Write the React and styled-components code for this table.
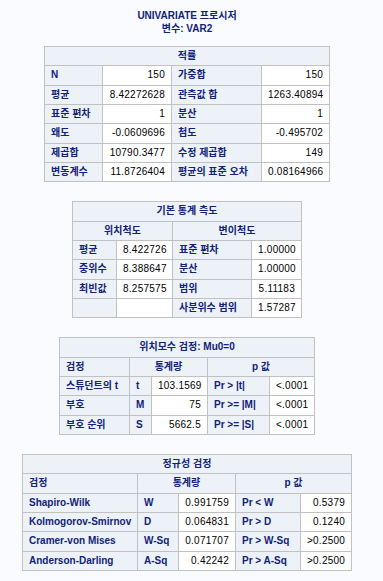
import React from "react";
import styled, { createGlobalStyle } from "styled-components";

const Global = createGlobalStyle`
  html, body { margin: 0; padding: 0; background: #fafbfe; }
  body { font-family: "Liberation Sans", Arial, "Noto Sans CJK KR", sans-serif; }
`;

const Page = styled.div`
  width: 374px;
  padding-top: 10px;
  display: flex;
  flex-direction: column;
  align-items: center;
`;

const Title = styled.div`
  text-align: center;
  color: #112277;
  font-weight: bold;
  font-size: 10px;
  line-height: 12.5px;
  margin-bottom: 11px;
`;

const Stack = styled.div`
  display: flex;
  flex-direction: column;
  align-items: center;
  gap: 19px;
`;

const Table = styled.table`
  border-collapse: collapse;
  table-layout: fixed;
  width: ${(p) => p.$width}px;
  border: 1px solid #c1c1c1;
  font-size: 10px;
`;

const Col = styled.col`
  width: ${(p) => p.$w}px;
`;

const Cell = styled.td`
  border: 1px solid #c1c1c1;
  padding: 3px 6px;
  line-height: 12.33px;
  height: 12.33px;
  white-space: nowrap;
  overflow: hidden;
  text-align: ${(p) => p.$align || "left"};
  background: ${(p) => (p.$head ? "#edf2f9" : "#ffffff")};
  color: ${(p) => (p.$head ? "#112277" : "#000000")};
  font-weight: ${(p) => (p.$head ? "bold" : "normal")};
  letter-spacing: ${(p) => (p.$head ? "0" : "0.25px")};
`;

// cell shorthand: [text, head?, align, colspan]
const H = (t, align = "left", span = 1) => ({ t, h: true, a: align, s: span });
const D = (t, align = "right") => ({ t, h: false, a: align, s: 1 });

const tables = [
  {
    cols: [58, 69, 90, 68],
    rows: [
      [H("적률", "center", 4)],
      [H("N"), D("150"), H("가중합"), D("150")],
      [H("평균"), D("8.42272628"), H("관측값 합"), D("1263.40894")],
      [H("표준 편차"), D("1"), H("분산"), D("1")],
      [H("왜도"), D("-0.0609696"), H("첨도"), D("-0.495702")],
      [H("제곱합"), D("10790.3477"), H("수정 제곱합"), D("149")],
      [H("변동계수"), D("11.8726404"), H("평균의 표준 오차"), D("0.08164966")],
    ],
  },
  {
    cols: [44, 56, 79, 50],
    rows: [
      [H("기본 통계 측도", "center", 4)],
      [H("위치척도", "center", 2), H("변이척도", "center", 2)],
      [H("평균"), D("8.422726"), H("표준 편차"), D("1.00000")],
      [H("중위수"), D("8.388647"), H("분산"), D("1.00000")],
      [H("최빈값"), D("8.257575"), H("범위"), D("5.11183")],
      [H(""), D(""), H("사분위수 범위"), D("1.57287")],
    ],
  },
  {
    cols: [70, 22, 56, 62, 45],
    rows: [
      [H("위치모수 검정: Mu0=0", "center", 5)],
      [H("검정"), H("통계량", "center", 2), H("p 값", "center", 2)],
      [H("스튜던트의 t"), H("t"), D("103.1569"), H("Pr > |t|"), D("<.0001")],
      [H("부호"), H("M"), D("75"), H("Pr >= |M|"), D("<.0001")],
      [H("부호 순위"), H("S"), D("5662.5"), H("Pr >= |S|"), D("<.0001")],
    ],
  },
  {
    cols: [115, 41, 57, 65, 51],
    rows: [
      [H("정규성 검정", "center", 5)],
      [H("검정"), H("통계량", "center", 2), H("p 값", "center", 2)],
      [H("Shapiro-Wilk"), H("W"), D("0.991759"), H("Pr < W"), D("0.5379")],
      [H("Kolmogorov-Smirnov"), H("D"), D("0.064831"), H("Pr > D"), D("0.1240")],
      [H("Cramer-von Mises"), H("W-Sq"), D("0.071707"), H("Pr > W-Sq"), D(">0.2500")],
      [H("Anderson-Darling"), H("A-Sq"), D("0.42242"), H("Pr > A-Sq"), D(">0.2500")],
    ],
  },
];

function StatTable({ cols, rows }) {
  const width = cols.reduce((a, b) => a + b, 0) + 1;
  return (
    <Table $width={width}>
      <colgroup>
        {cols.map((w, i) => (
          <Col key={i} $w={w} />
        ))}
      </colgroup>
      <tbody>
        {rows.map((r, ri) => (
          <tr key={ri}>
            {r.map((c, ci) => (
              <Cell
                key={ci}
                as={c.h ? "th" : "td"}
                colSpan={c.s}
                $head={c.h}
                $align={c.a}
              >
                {c.t}
              </Cell>
            ))}
          </tr>
        ))}
      </tbody>
    </Table>
  );
}

export default function App() {
  return (
    <>
      <Global />
      <Page>
        <Title>
          <div>UNIVARIATE 프로시저</div>
          <div>변수: VAR2</div>
        </Title>
        <Stack>
          {tables.map((t, i) => (
            <StatTable key={i} cols={t.cols} rows={t.rows} />
          ))}
        </Stack>
      </Page>
    </>
  );
}
